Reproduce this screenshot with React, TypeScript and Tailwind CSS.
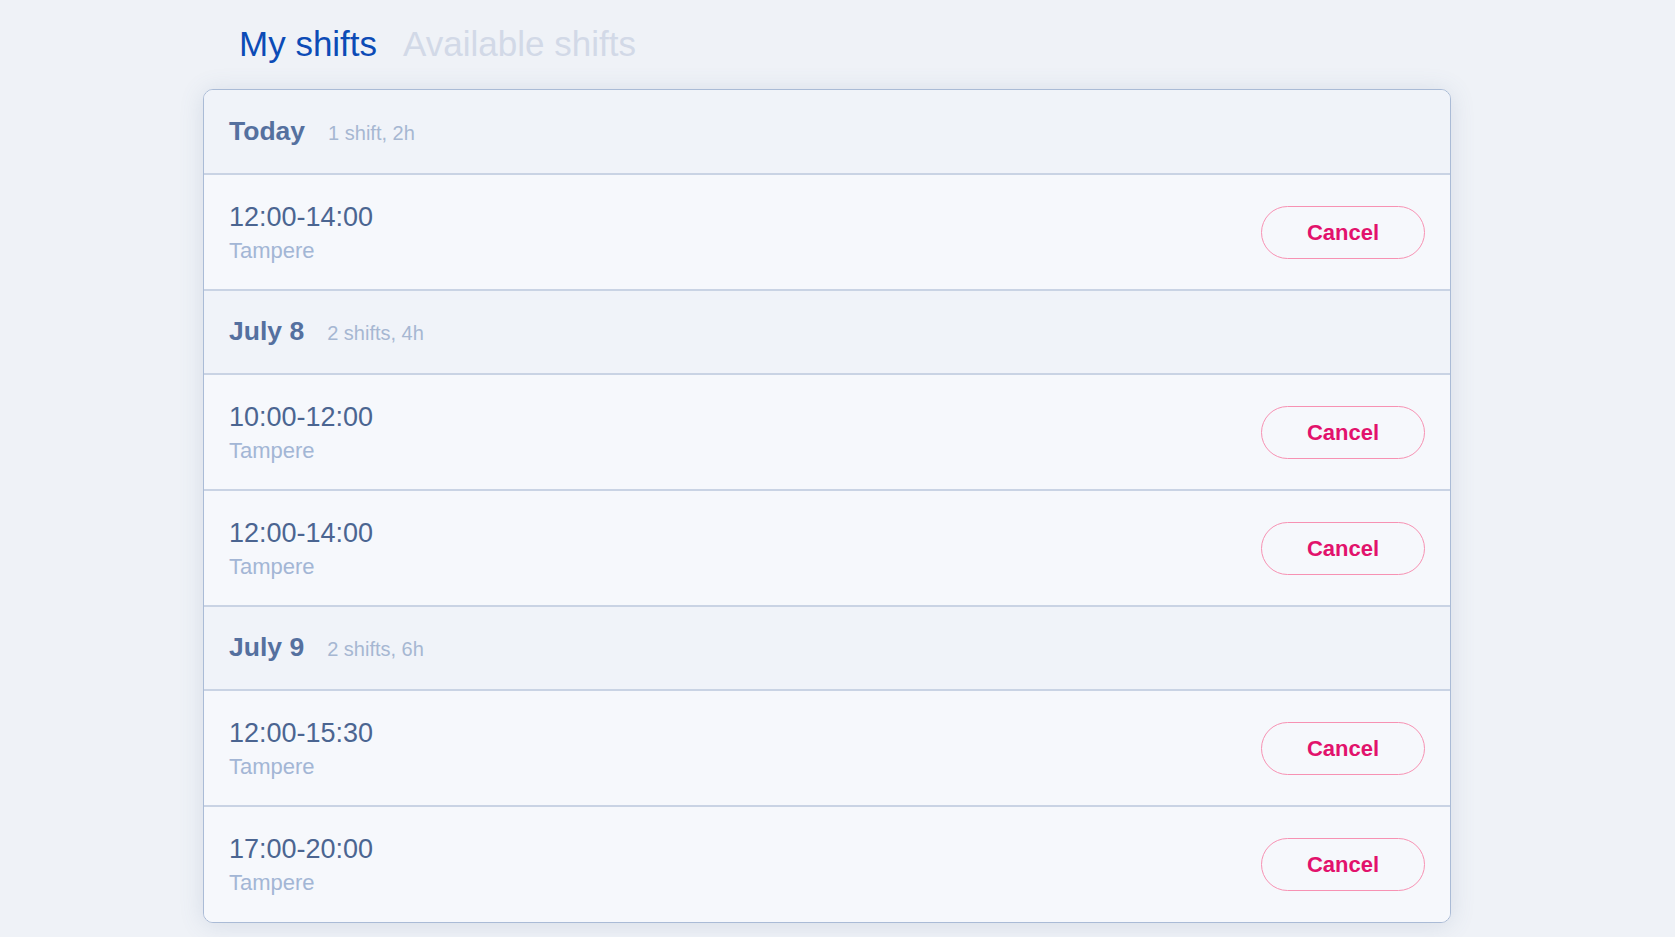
import React from "react";

type Shift = { time: string; place: string };
type Day = { title: string; summary: string; shifts: Shift[] };

const days: Day[] = [
  { title: "Today", summary: "1 shift, 2h", shifts: [{ time: "12:00-14:00", place: "Tampere" }] },
  {
    title: "July 8",
    summary: "2 shifts, 4h",
    shifts: [
      { time: "10:00-12:00", place: "Tampere" },
      { time: "12:00-14:00", place: "Tampere" },
    ],
  },
  {
    title: "July 9",
    summary: "2 shifts, 6h",
    shifts: [
      { time: "12:00-15:30", place: "Tampere" },
      { time: "17:00-20:00", place: "Tampere" },
    ],
  },
];

export default function App() {
  const total = days.reduce((n, d) => n + 1 + d.shifts.length, 0);
  let idx = 0;
  return (
    <div
      className="min-h-[937px] w-full bg-[#eff2f7] pt-[24px]"
      style={{ fontFamily: '"Liberation Sans", Arial, sans-serif' }}
    >
      <div className="ml-[203px] w-[1248px]">
        <div className="flex items-center gap-[26px] pl-[36px] text-[35px] leading-[40px]">
          <span className="text-[#0c4bb6]">My shifts</span>
          <span className="text-[#d2d9e7]">Available shifts</span>
        </div>
        <div className="mt-[25px] overflow-hidden rounded-[10px] border border-[#aabbd6] bg-[#f6f8fc] shadow-[0_2px_24px_rgba(90,110,150,0.16)]">
          {days.map((d, di) => {
            idx++;
            const headerLast = idx === total;
            return (
              <React.Fragment key={d.title}>
                <div
                  className={`flex items-center bg-[#f0f3f9] px-[25px] ${di === 0 ? "h-[85px]" : "h-[84px]"} ${
                    headerLast ? "" : "border-b-2 border-[#c9d3e4]"
                  }`}
                >
                  <div className="flex items-baseline gap-[23px]">
                    <span className="text-[26.5px] font-bold text-[#55709f]">{d.title}</span>
                    <span className="text-[20px] text-[#a6b7d2]">{d.summary}</span>
                  </div>
                </div>
                {d.shifts.map((s, i) => {
                  idx++;
                  const last = idx === total;
                  return (
                    <div
                      key={i}
                      className={`flex items-center justify-between bg-[#f6f8fc] px-[25px] ${
                        last ? "h-[115px]" : "h-[116px] border-b-2 border-[#c9d3e4]"
                      }`}
                    >
                      <div className="flex flex-col">
                        <span className="text-[27px] leading-[32px] text-[#4b6591]">{s.time}</span>
                        <span className="mt-[5px] text-[22px] leading-[26px] text-[#a3b6d5]">{s.place}</span>
                      </div>
                      <button className="h-[53px] w-[164px] rounded-full border border-[#f792b3] bg-transparent text-[22px] font-bold text-[#e2126c]">
                        Cancel
                      </button>
                    </div>
                  );
                })}
              </React.Fragment>
            );
          })}
        </div>
      </div>
    </div>
  );
}
